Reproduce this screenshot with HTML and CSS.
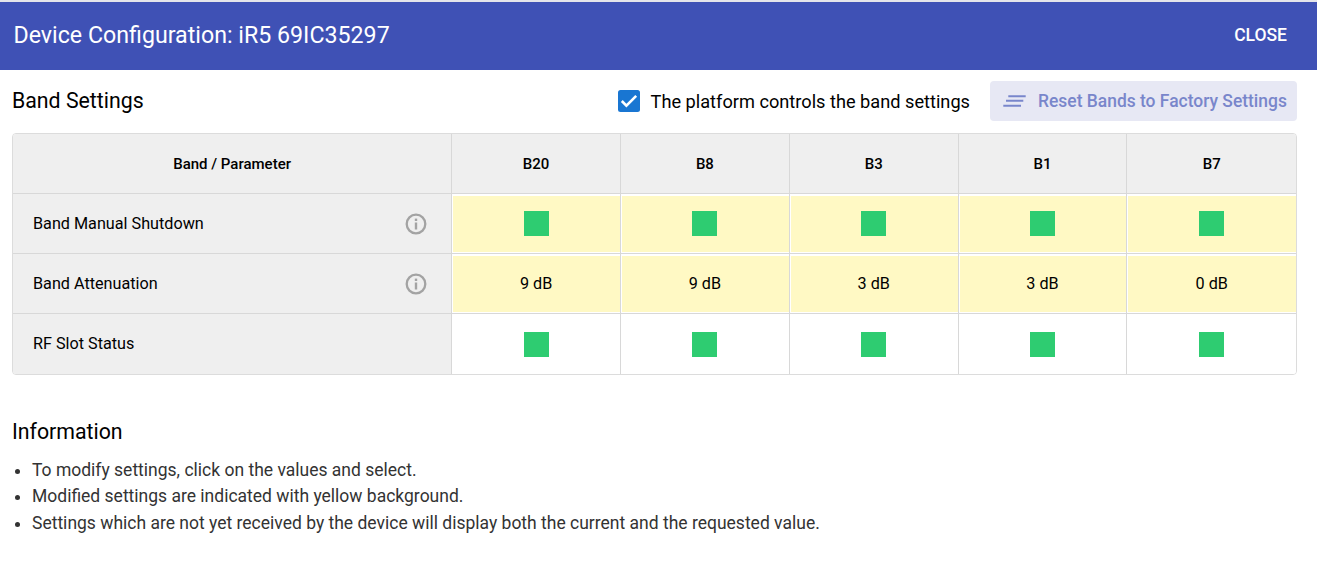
FILE: index.html
```html
<!DOCTYPE html>
<html lang="en">
<head>
<meta charset="utf-8">
<title>Device Configuration</title>
<link rel="stylesheet" href="styles.css">
</head>
<body>
<div class="topstrip"></div>
<header class="appbar">
  <h1 class="appbar-title">Device Configuration: iR5 69IC35297</h1>
  <button class="close-btn">CLOSE</button>
</header>
<main class="content">
  <section class="toolbar">
    <h2 class="section-title">Band Settings</h2>
    <div class="toolbar-actions">
      <label class="check-label">
        <svg class="checkbox" width="22" height="22" viewBox="0 0 22 22"><rect width="22" height="22" rx="2.500" fill="#1976d2"/><path d="M3.800 11l4.600 4.600 9.800-9.800" fill="none" stroke="#fff" stroke-width="2.600"/></svg>
        <span>The platform controls the band settings</span>
      </label>
      <button class="reset-btn">
        <svg width="24" height="12" viewBox="0 0 24 12"><path d="M5.300 1.200h17.400M3 5.800h17.300M.3 10.800h17.700" fill="none" stroke="#7986cb" stroke-width="1.900"/></svg>
        <span>Reset Bands to Factory Settings</span>
      </button>
    </div>
  </section>
  <div class="band-table">
    <div class="cell head first">Band / Parameter</div>
    <div class="cell head">B20</div>
    <div class="cell head">B8</div>
    <div class="cell head">B3</div>
    <div class="cell head">B1</div>
    <div class="cell head">B7</div>

    <div class="cell label"><span>Band Manual Shutdown</span><svg class="info" width="22" height="22" viewBox="0 0 22 22"><circle cx="11" cy="11" r="9.300" fill="none" stroke="#a3a3a3" stroke-width="2.300"/><rect x="9.800" y="9.500" width="2.400" height="7" fill="#a3a3a3"/><rect x="9.800" y="5.600" width="2.400" height="2.400" fill="#a3a3a3"/></svg></div>
    <div class="cell mod"><i class="sq"></i></div>
    <div class="cell mod"><i class="sq"></i></div>
    <div class="cell mod"><i class="sq"></i></div>
    <div class="cell mod"><i class="sq"></i></div>
    <div class="cell mod"><i class="sq"></i></div>

    <div class="cell label"><span>Band Attenuation</span><svg class="info" width="22" height="22" viewBox="0 0 22 22"><circle cx="11" cy="11" r="9.300" fill="none" stroke="#a3a3a3" stroke-width="2.300"/><rect x="9.800" y="9.500" width="2.400" height="7" fill="#a3a3a3"/><rect x="9.800" y="5.600" width="2.400" height="2.400" fill="#a3a3a3"/></svg></div>
    <div class="cell mod">9 dB</div>
    <div class="cell mod">9 dB</div>
    <div class="cell mod">3 dB</div>
    <div class="cell mod">3 dB</div>
    <div class="cell mod">0 dB</div>

    <div class="cell label last"><span>RF Slot Status</span></div>
    <div class="cell last"><i class="sq"></i></div>
    <div class="cell last"><i class="sq"></i></div>
    <div class="cell last"><i class="sq"></i></div>
    <div class="cell last"><i class="sq"></i></div>
    <div class="cell last"><i class="sq"></i></div>
  </div>
  <section class="info-block">
    <h2 class="section-title">Information</h2>
    <ul class="info-list">
      <li>To modify settings, click on the values and select.</li>
      <li>Modified settings are indicated with yellow background.</li>
      <li>Settings which are not yet received by the device will display both the current and the requested value.</li>
    </ul>
  </section>
</main>
</body>
</html>
```
FILE: styles.css
```css
* { box-sizing: border-box; }
html, body { margin: 0; padding: 0; }
body {
  width: 1317px;
  height: 566px;
  overflow: hidden;
  background: #fff;
  font-family: Roboto, "Liberation Sans", sans-serif;
  color: #000;
}
.topstrip { height: 2px; background: #e4e4ea; }
.appbar {
  height: 68px;
  background: #3f51b5;
  color: #fff;
  display: flex;
  align-items: center;
  justify-content: space-between;
  padding: 0 30px 2px 13.500px;
}
.appbar-title { margin: 0; font-size: 23.200px; font-weight: 400; }
.close-btn {
  border: 0;
  background: none;
  color: #fff;
  font: 500 17.500px Roboto, sans-serif;
  padding: 0;
}
.content { padding: 0 20px 0 12px; }
.toolbar {
  height: 62px;
  margin-bottom: 1px;
  display: flex;
  align-items: center;
  justify-content: space-between;
}
.section-title { margin: 0; font-size: 21.300px; line-height: 24px; font-weight: 400; }
.toolbar-actions { display: flex; align-items: center; }
.check-label { display: flex; align-items: center; gap: 11px; font-size: 18.200px; margin-right: 20px; }
.checkbox { display: block; }
.reset-btn {
  width: 307px;
  height: 40px;
  display: flex;
  align-items: center;
  gap: 11px;
  padding: 0 0 0 13px;
  border: 0;
  border-radius: 4px;
  background: #e7e8f4;
  color: #7986cb;
  font: 500 17.450px Roboto, sans-serif;
}
.band-table {
  width: 1285px;
  height: 242px;
  display: grid;
  grid-template-columns: 438.200px 168.800px 168.800px 168.800px 168.800px 1fr;
  grid-template-rows: 60px 60px 60px 1fr;
  border: 1px solid #dcdcdc;
  border-radius: 4px;
  overflow: hidden;
  font-size: 16.200px;
}
.cell {
  display: flex;
  align-items: center;
  justify-content: center;
  border-left: 1px solid #d8d8d8;
  border-bottom: 1px solid #d8d8d8;
  background: #fff;
}
.cell.last { border-bottom: 0; }
.head { background: #efefef; font-size: 15px; font-weight: 500; padding-top: 1px; }
.head.first, .label { border-left: 0; }
.label {
  background: #efefef;
  justify-content: space-between;
  padding: 0 24px 0 20px;
}
.label.last { padding-bottom: 2px; }
.mod {
  background: #fff9c4;
  box-shadow: inset 1px 2px 0 #fff, inset 0 -1px 0 #fff;
}
.sq { display: block; width: 25px; height: 25px; background: #2ecc71; }
.info { display: block; }
.info-block { margin-top: 45px; }
.info-list { margin: 12.700px 0 0; padding: 0 0 0 20px; font-size: 17.500px; line-height: 26.500px; color: #333; }
```
